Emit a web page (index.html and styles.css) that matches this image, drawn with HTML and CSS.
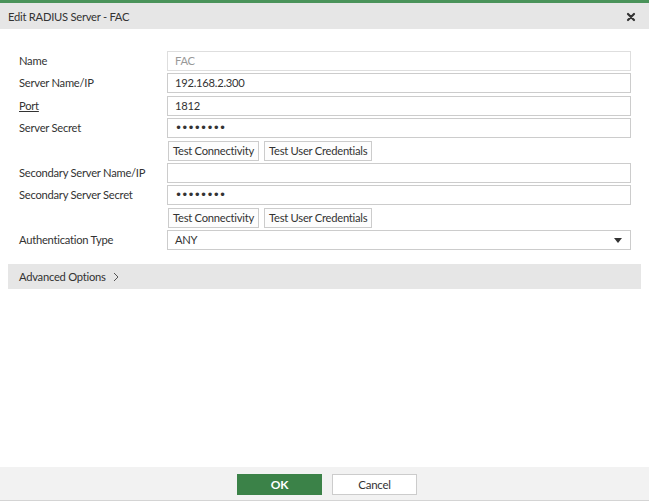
FILE: index.html
```html
<!DOCTYPE html>
<html>
  <head>
    <meta charset="UTF-8" />
    <title>Edit RADIUS Server - FAC</title>
    <link rel="stylesheet" href="styles.css">
  </head>
  <body>
    <div class="dialog">
      <div class="dialog-header">
        <span class="dialog-title">Edit RADIUS Server - FAC</span>
        <svg class="close-icon" viewBox="0 0 10 10" xmlns="http://www.w3.org/2000/svg">
          <path d="M2 2L8 8M8 2L2 8" stroke="currentColor" stroke-width="2.2" stroke-linecap="round" />
        </svg>
      </div>

      <div class="dialog-body">
        <div class="form-grid">
          <label class="form-label">Name</label>
          <div class="form-input disabled">FAC</div>

          <label class="form-label">Server Name/IP</label>
          <div class="form-input">192.168.2.300</div>

          <label class="form-label"><a href="#" class="form-link">Port</a></label>
          <div class="form-input">1812</div>

          <label class="form-label">Server Secret</label>
          <div class="form-input secret">&bull;&bull;&bull;&bull;&bull;&bull;&bull;&bull;</div>

          <span></span>
          <div class="button-row">
            <button class="button">Test Connectivity</button>
            <button class="button">Test User Credentials</button>
          </div>

          <label class="form-label">Secondary Server Name/IP</label>
          <div class="form-input"></div>

          <label class="form-label">Secondary Server Secret</label>
          <div class="form-input secret">&bull;&bull;&bull;&bull;&bull;&bull;&bull;&bull;</div>

          <span></span>
          <div class="button-row">
            <button class="button">Test Connectivity</button>
            <button class="button">Test User Credentials</button>
          </div>

          <label class="form-label">Authentication Type</label>
          <div class="form-input select">
            <span>ANY</span>
            <svg class="select-arrow" viewBox="0 0 8 5" xmlns="http://www.w3.org/2000/svg">
              <path d="M0 0H8L4 5Z" fill="currentColor" />
            </svg>
          </div>
        </div>

        <div class="advanced">
          Advanced Options
          <svg class="chevron" viewBox="0 0 6 10" xmlns="http://www.w3.org/2000/svg">
            <path d="M1 1L5 5L1 9" stroke="currentColor" stroke-width="1" fill="none" />
          </svg>
        </div>
      </div>

      <div class="dialog-footer">
        <button class="button ok-button">OK</button>
        <button class="button cancel-button">Cancel</button>
      </div>
    </div>
  </body>
</html>
```

FILE: styles.css
```css
:root {
  --green: #4a935a;
  --ok-green: #3b8248;
  --header-bg: #e6e6e6;
  --footer-bg: #f2f2f2;
  --text: #333333;
  --text-muted: #999999;
  --border: #cccccc;
  --border-light: #dedede;
  --font-size: 11.2px;
  --tracking: -0.25px;
}

* {
  margin: 0;
  padding: 0;
  box-sizing: border-box;
}

body {
  font-family: Lato, "Open Sans", Arial, sans-serif;
  font-size: var(--font-size);
  letter-spacing: var(--tracking);
  color: var(--text);
  background-color: #ffffff;
  height: 100vh;
  overflow: hidden;
}

.dialog {
  height: 100%;
  display: flex;
  flex-direction: column;
  border-top: 3px solid var(--green);
}

.dialog-header {
  height: 26px;
  background-color: var(--header-bg);
  display: flex;
  align-items: center;
  justify-content: space-between;
  padding: 0 13px 0 8px;
  flex-shrink: 0;
}

.dialog-title {
  font-size: var(--font-size);
}

.close-icon {
  width: 10px;
  height: 10px;
  color: #333333;
  margin-top: 2px;
}

.dialog-body {
  flex: 1;
  padding-top: 22px;
}

.form-grid {
  display: grid;
  grid-template-columns: 148px 464px;
  row-gap: 2.4px;
  padding-left: 19px;
  align-items: center;
}

.form-label {
  font-size: var(--font-size);
  line-height: 20px;
}

.form-link {
  color: var(--text);
  text-decoration: underline;
}

.form-input {
  height: 20px;
  border: 1px solid var(--border);
  padding: 0 7px;
  line-height: 18px;
  font-size: var(--font-size);
  background-color: #ffffff;
}

.form-input.disabled {
  color: var(--text-muted);
  border-color: var(--border-light);
}

.form-input.secret {
  font-size: 12px;
  letter-spacing: -0.8px;
  font-family: "DejaVu Sans", sans-serif;
}

.form-input.select {
  display: flex;
  align-items: center;
  justify-content: space-between;
  padding-right: 8px;
}

.select-arrow {
  width: 8px;
  height: 5px;
  color: #333333;
}

.button-row {
  display: flex;
  gap: 5px;
  padding-left: 1px;
}

.button {
  font-family: Lato, "Open Sans", Arial, sans-serif;
  font-size: var(--font-size);
  letter-spacing: var(--tracking);
  color: var(--text);
  height: 20px;
  padding: 0 4px;
  border: 1px solid var(--border);
  background-color: #fdfdfd;
  cursor: pointer;
}

.advanced {
  margin: 14px 8px 0;
  height: 25px;
  background-color: var(--header-bg);
  display: flex;
  align-items: center;
  gap: 7px;
  padding-left: 11px;
  font-size: var(--font-size);
}

.chevron {
  width: 6px;
  height: 10px;
  color: #555555;
}

.dialog-footer {
  height: 34px;
  margin-bottom: 2px;
  background-color: var(--footer-bg);
  border-bottom: 1px solid #d4d4d4;
  display: flex;
  justify-content: center;
  align-items: flex-start;
  gap: 10px;
  padding-top: 7px;
  padding-left: 5px;
  flex-shrink: 0;
}

.ok-button {
  width: 85px;
  height: 21px;
  background-color: var(--ok-green);
  border-color: var(--ok-green);
  color: #ffffff;
  font-weight: 700;
  font-size: 12px;
}

.cancel-button {
  width: 85px;
  height: 21px;
  background-color: #ffffff;
  border-color: var(--border);
  font-size: 11.5px;
}
```
